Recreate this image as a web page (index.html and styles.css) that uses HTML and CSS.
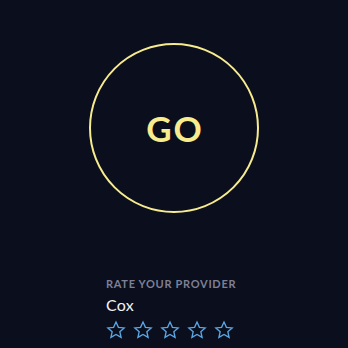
FILE: index.html
```html
<!DOCTYPE html>
<html>
<head>
<meta charset="utf-8">
<link rel="stylesheet" href="styles.css">
</head>
<body>
<main class="screen">
  <div class="go-wrap">
    <div class="go-circle"><span class="go-text">GO</span></div>
  </div>
  <section class="rate">
    <div class="rate-label">RATE YOUR PROVIDER</div>
    <div class="rate-name">Cox</div>
    <div class="stars">
      <svg class="star" viewBox="0 0 24 24"><path d="M12 2.5l2.9 6.3 6.9.7-5.2 4.6 1.5 6.8L12 17.4l-6.1 3.5 1.5-6.8-5.2-4.6 6.9-.7z"/></svg>
      <svg class="star" viewBox="0 0 24 24"><path d="M12 2.5l2.9 6.3 6.9.7-5.2 4.6 1.5 6.8L12 17.4l-6.1 3.5 1.5-6.8-5.2-4.6 6.9-.7z"/></svg>
      <svg class="star" viewBox="0 0 24 24"><path d="M12 2.5l2.9 6.3 6.9.7-5.2 4.6 1.5 6.8L12 17.4l-6.1 3.5 1.5-6.8-5.2-4.6 6.9-.7z"/></svg>
      <svg class="star" viewBox="0 0 24 24"><path d="M12 2.5l2.9 6.3 6.9.7-5.2 4.6 1.5 6.8L12 17.4l-6.1 3.5 1.5-6.8-5.2-4.6 6.9-.7z"/></svg>
      <svg class="star" viewBox="0 0 24 24"><path d="M12 2.5l2.9 6.3 6.9.7-5.2 4.6 1.5 6.8L12 17.4l-6.1 3.5 1.5-6.8-5.2-4.6 6.9-.7z"/></svg>
    </div>
  </section>
</main>
</body>
</html>
```
FILE: styles.css
```css
html, body {
  margin: 0;
  padding: 0;
  background: #0b0e1c;
}
.screen {
  width: 348px;
  height: 348px;
  overflow: hidden;
  font-family: "Lato", "Noto Sans", sans-serif;
}
.go-wrap {
  display: flex;
  justify-content: center;
  padding-top: 43px;
}
.go-circle {
  width: 166px;
  height: 166px;
  border: 2px solid #f6eb8f;
  border-radius: 50%;
  display: flex;
  align-items: center;
  justify-content: center;
}
.go-text {
  color: #f8ec8e;
  font-family: "Lato", sans-serif;
  font-weight: 700;
  font-size: 35px;
  letter-spacing: 2px;
  padding-left: 2px;
}
.rate {
  padding: 64px 0 0 106px;
}
.rate-label {
  color: #7d8096;
  font-family: "Lato", sans-serif;
  font-weight: 700;
  font-size: 11px;
  letter-spacing: 0.7px;
  line-height: 14px;
}
.rate-name {
  color: #f2f3f7;
  font-family: "Lato", sans-serif;
  font-size: 16px;
  letter-spacing: 0.3px;
  line-height: 20px;
  margin-top: 4px;
}
.stars {
  display: flex;
  gap: 7px;
  margin-top: 5px;
}
.star {
  width: 20px;
  height: 20px;
  fill: none;
  stroke: #5aa7e6;
  stroke-width: 1.6;
  stroke-linejoin: miter;
}
```
